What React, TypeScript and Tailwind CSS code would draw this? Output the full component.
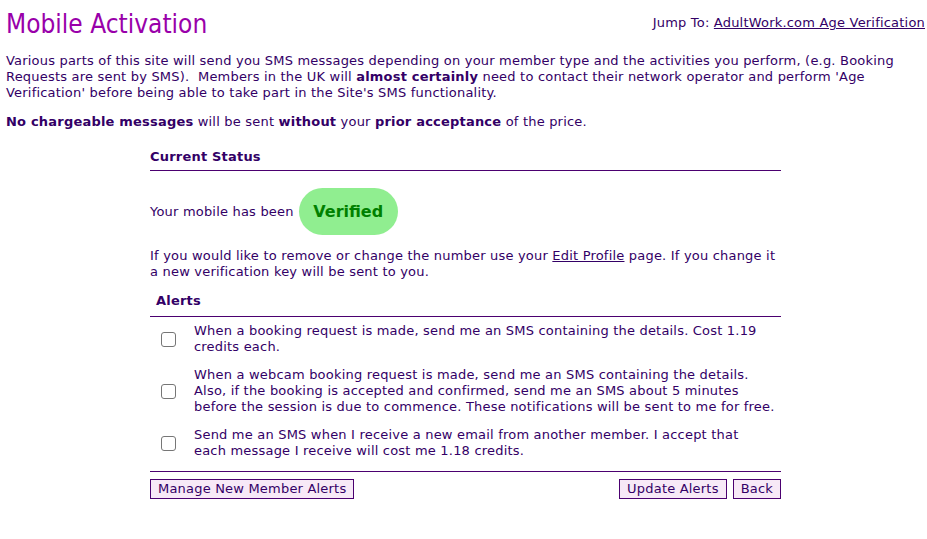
import React from 'react';

const alerts: React.ReactNode[] = [
  'When a booking request is made, send me an SMS containing the details. Cost 1.19 credits each.',
  'When a webcam booking request is made, send me an SMS containing the details. Also, if the booking is accepted and confirmed, send me an SMS about 5 minutes before the session is due to commence. These notifications will be sent to me for free.',
  <>
    Send me an SMS when I receive a new email from another member. I accept that
    <br />
    each message I receive will cost me 1.18 credits.
  </>,
];

function Checkbox() {
  return (
    <input
      type="checkbox"
      className="appearance-none w-[15px] h-[15px] border border-[#767676] rounded-[3px] bg-white block"
    />
  );
}

function Btn({ children }: { children: React.ReactNode }) {
  return (
    <button className="bg-[#f7e9f7] border border-[#4b0070] text-[#330066] text-[13px] tracking-[0.2px] leading-[16px] px-[7px] pt-[1px] pb-[1px] h-[20px]">
      {children}
    </button>
  );
}

export default function App() {
  return (
    <div
      className="bg-white min-h-[539px] px-[6px] text-[#330066] text-[13px] leading-[16px] tracking-[0.2px]"
      style={{ fontFamily: '"DejaVu Sans", Verdana, sans-serif' }}
    >
      {/* header */}
      <div className="flex justify-between items-start pt-[8px]">
        <h1
          className="text-[#9900aa] text-[26px] leading-[32px] tracking-normal"
          style={{ fontFamily: '"DejaVu Sans Condensed", Tahoma, sans-serif' }}
        >
          Mobile Activation
        </h1>
        <div className="pt-[7px] -mr-[4px]">
          Jump To: <a className="underline">AdultWork.com Age Verification</a>
        </div>
      </div>

      <p className="mt-[13px] pr-[24px]">
        Various parts of this site will send you SMS messages depending on your member type and the activities you perform, (e.g. Booking Requests are sent by SMS).&nbsp; Members in the UK will <b>almost certainly</b> need to contact their network operator and perform 'Age Verification' before being able to take part in the Site's SMS functionality.
      </p>
      <p className="mt-[13px]">
        <b>No chargeable messages</b> will be sent <b>without</b> your <b>prior acceptance</b> of the price.
      </p>

      <div className="w-[631px] ml-[144px] mt-[19px]">
        <div className="font-bold pb-[5px] border-b border-[#4b0070]">Current Status</div>

        <div className="flex items-center mt-[17px]">
          <span>Your mobile has been</span>
          <span className="ml-[5px] bg-[#90ee90] text-[#008000] font-bold text-[16px] tracking-normal leading-[47px] h-[47px] w-[99px] rounded-[24px] text-center">
            Verified
          </span>
        </div>

        <p className="mt-[13px]">
          If you would like to remove or change the number use your <a className="underline">Edit Profile</a> page. If you change it a new verification key will be sent to you.
        </p>

        <div className="font-bold mt-[13px] pl-[6px] pb-[7px] border-b border-[#4b0070]">Alerts</div>

        <div className="flex flex-col pt-[6px] pb-[12px] gap-[12px] border-b border-[#4b0070]">
          {alerts.map((t, i) => (
            <div key={i} className="flex items-center">
              <div className="w-[44px] pl-[11px] shrink-0">
                <Checkbox />
              </div>
              <div className="flex-1 pr-[4px]">{t}</div>
            </div>
          ))}
        </div>

        <div className="flex justify-between mt-[7px]">
          <Btn>Manage New Member Alerts</Btn>
          <div className="flex gap-[6px]">
            <Btn>Update Alerts</Btn>
            <Btn>Back</Btn>
          </div>
        </div>
      </div>
    </div>
  );
}
